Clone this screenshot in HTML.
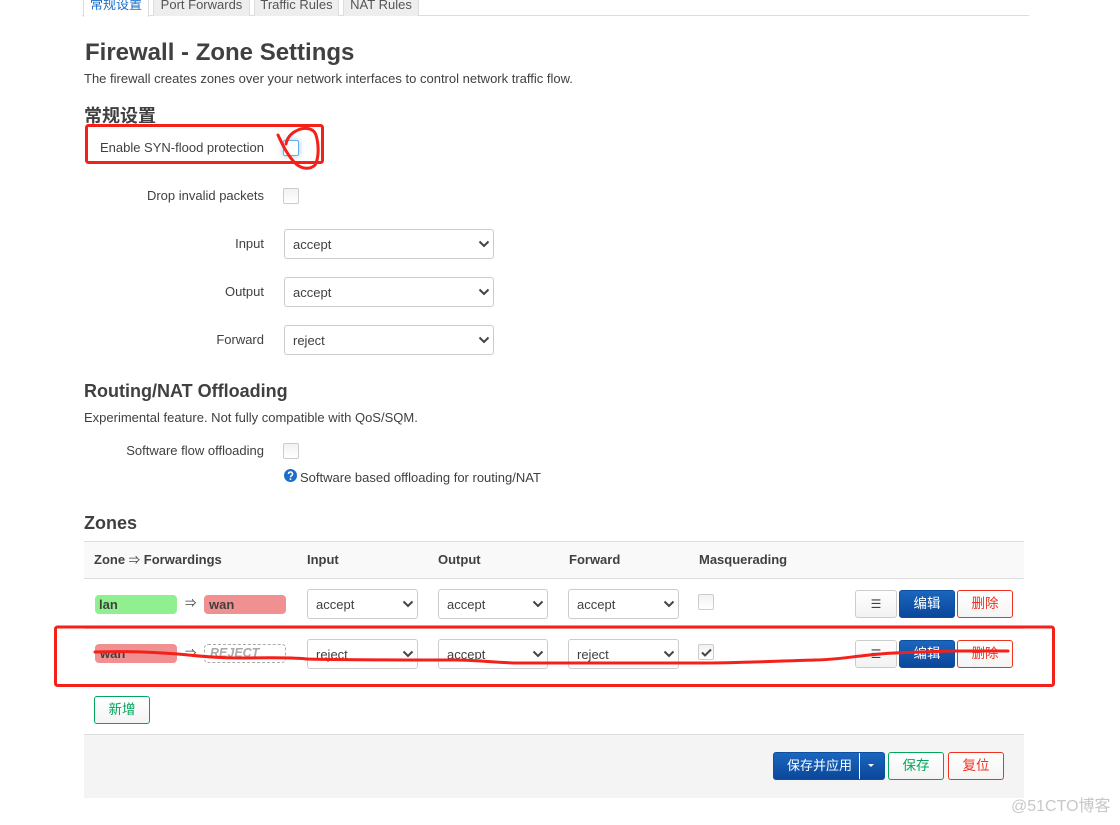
<!DOCTYPE html>
<html><head><meta charset="utf-8"><style>
html,body{margin:0;padding:0;background:#fff}
body{width:1120px;height:825px;position:relative;overflow:hidden;font-family:"Liberation Sans","Noto Sans CJK SC",sans-serif;font-size:13px;color:#404040}
.a{position:absolute;white-space:nowrap}
.lb{position:absolute;right:856px;white-space:nowrap;font-size:13px;line-height:16px}
.cb{position:absolute;width:14px;height:14px;border:1px solid #ccc;border-radius:2px;background:linear-gradient(#f2f2f2,#fff)}
.sel{position:absolute;height:28px;border:1px solid #ccc;border-radius:3px;background:#fff;line-height:30px;padding-left:8px;box-sizing:content-box;font-size:13px;color:#404040}
.sel svg{position:absolute;right:3px;top:10px}
.tab{position:absolute;top:-8px;height:23px;background:#eee;border:1px solid #ddd;border-bottom:0;font-size:13px;line-height:23px;text-align:center;color:#555}
.zone{position:absolute;width:82px;height:19px;border-radius:4px;line-height:19px;padding-left:5px;box-sizing:border-box;font-weight:bold;font-size:13px;color:#404040}
.btn{position:absolute;box-sizing:border-box;border-radius:3px;text-align:center;font-size:13.5px;height:28px;line-height:26px}
.blue{background:linear-gradient(#1a66bf,#0b479b);border:1px solid #0e4f9f;color:#fff}
.red{background:linear-gradient(#fff,#f4f4f4);border:1px solid #f0321e;color:#f0321e}
.grn{background:linear-gradient(#fff,#f4f4f4);border:1px solid #00a65a;color:#00a65a}
.gry{background:linear-gradient(#fff,#f2f2f2);border:1px solid #ccc;color:#404040;font-size:12px}
.arr{position:absolute;font-size:11.5px;line-height:16px}
h3{position:absolute;margin:0;font-size:18px;font-weight:bold;line-height:22px;white-space:nowrap;color:#404040}
</style></head><body>

<div class="a" style="left:82px;top:15px;width:947px;height:1px;background:#ddd"></div>
<div class="tab" style="left:83px;width:64px;background:#fff;border-color:#ddd;height:24px;color:#1a6fc9">常规设置</div>
<div class="tab" style="left:153px;width:95px">Port Forwards</div>
<div class="tab" style="left:254px;width:83px">Traffic Rules</div>
<div class="tab" style="left:343px;width:74px">NAT Rules</div>

<div class="a" style="left:85px;top:39px;font-size:24px;font-weight:bold;line-height:28px">Firewall - Zone Settings</div>
<div class="a" style="left:84px;top:71px;line-height:16px;font-size:13px">The firewall creates zones over your network interfaces to control network traffic flow.</div>

<h3 style="left:84px;top:105px">常规设置</h3>
<div class="lb" style="top:140px">Enable SYN-flood protection</div>
<div class="cb" style="left:283px;top:140px;border-color:#66afe9;background:#fff;box-shadow:0 0 6px rgba(102,175,233,.7)"></div>
<div class="lb" style="top:188px">Drop invalid packets</div>
<div class="cb" style="left:283px;top:188px"></div>

<div class="lb" style="top:236px">Input</div>
<div class="sel" style="left:284px;top:229px;width:200px">accept<svg width="12" height="8" viewBox="0 0 12 8"><path d="M1.500 1.500 6 6l4.500-4.500" fill="none" stroke="#444" stroke-width="2"/></svg></div>
<div class="lb" style="top:284px">Output</div>
<div class="sel" style="left:284px;top:277px;width:200px">accept<svg width="12" height="8" viewBox="0 0 12 8"><path d="M1.500 1.500 6 6l4.500-4.500" fill="none" stroke="#444" stroke-width="2"/></svg></div>
<div class="lb" style="top:332px">Forward</div>
<div class="sel" style="left:284px;top:325px;width:200px">reject<svg width="12" height="8" viewBox="0 0 12 8"><path d="M1.500 1.500 6 6l4.500-4.500" fill="none" stroke="#444" stroke-width="2"/></svg></div>

<h3 style="left:84px;top:380px">Routing/NAT Offloading</h3>
<div class="a" style="left:84px;top:410px;line-height:16px;font-size:13px">Experimental feature. Not fully compatible with QoS/SQM.</div>
<div class="lb" style="top:443px">Software flow offloading</div>
<div class="cb" style="left:283px;top:443px"></div>
<svg class="a" style="left:284px;top:469px" width="13" height="13" viewBox="0 0 13 13"><circle cx="6.500" cy="6.500" r="6.500" fill="#1a6fc9"/><path d="M4.500 5a2 2 0 1 1 3 1.700c-.7.4-1 .8-1 1.500" fill="none" stroke="#fff" stroke-width="1.500"/><rect x="5.700" y="9.300" width="1.600" height="1.600" fill="#fff"/></svg>
<div class="a" style="left:300px;top:470px;line-height:16px;font-size:13px">Software based offloading for routing/NAT</div>

<h3 style="left:84px;top:512px">Zones</h3>

<div class="a" style="left:84px;top:541px;width:940px;height:36px;background:#f9f9f9;border-top:1px solid #ddd;border-bottom:1px solid #ddd"></div>
<div class="a" style="left:94px;top:552px;font-weight:bold;font-size:13px;line-height:16px">Zone <span style="font-size:11.5px;font-weight:normal">⇒</span> Forwardings</div>
<div class="a" style="left:307px;top:552px;font-weight:bold;font-size:13px;line-height:16px">Input</div>
<div class="a" style="left:438px;top:552px;font-weight:bold;font-size:13px;line-height:16px">Output</div>
<div class="a" style="left:569px;top:552px;font-weight:bold;font-size:13px;line-height:16px">Forward</div>
<div class="a" style="left:699px;top:552px;font-weight:bold;font-size:13px;line-height:16px">Masquerading</div>

<div class="zone" style="left:95px;top:595px;background:#90f090;padding-left:4px">lan</div>
<div class="arr" style="left:185px;top:596px">⇒</div>
<div class="zone" style="left:204px;top:595px;background:#f09090">wan</div>
<div class="sel" style="left:307px;top:589px;width:101px">accept<svg width="12" height="8" viewBox="0 0 12 8"><path d="M1.500 1.500 6 6l4.500-4.500" fill="none" stroke="#444" stroke-width="2"/></svg></div>
<div class="sel" style="left:438px;top:589px;width:100px">accept<svg width="12" height="8" viewBox="0 0 12 8"><path d="M1.500 1.500 6 6l4.500-4.500" fill="none" stroke="#444" stroke-width="2"/></svg></div>
<div class="sel" style="left:568px;top:589px;width:101px">accept<svg width="12" height="8" viewBox="0 0 12 8"><path d="M1.500 1.500 6 6l4.500-4.500" fill="none" stroke="#444" stroke-width="2"/></svg></div>
<div class="cb" style="left:698px;top:594px"></div>
<div class="btn gry" style="left:855px;top:590px;width:42px">☰</div>
<div class="btn blue" style="left:899px;top:590px;width:56px">编辑</div>
<div class="btn red" style="left:957px;top:590px;width:56px">删除</div>

<div class="a" style="left:84px;top:628px;width:940px;height:1px;background:#ddd"></div>

<div class="zone" style="left:95px;top:644px;background:#f09090">wan</div>
<div class="arr" style="left:185px;top:646px">⇒</div>
<div class="zone" style="left:204px;top:644px;border:1px dashed #aaa;font-style:italic;color:#aaa;width:82px;line-height:17px;padding-left:5px;font-size:12.500px">REJECT</div>
<div class="sel" style="left:307px;top:639px;width:101px">reject<svg width="12" height="8" viewBox="0 0 12 8"><path d="M1.500 1.500 6 6l4.500-4.500" fill="none" stroke="#444" stroke-width="2"/></svg></div>
<div class="sel" style="left:438px;top:639px;width:100px">accept<svg width="12" height="8" viewBox="0 0 12 8"><path d="M1.500 1.500 6 6l4.500-4.500" fill="none" stroke="#444" stroke-width="2"/></svg></div>
<div class="sel" style="left:568px;top:639px;width:101px">reject<svg width="12" height="8" viewBox="0 0 12 8"><path d="M1.500 1.500 6 6l4.500-4.500" fill="none" stroke="#444" stroke-width="2"/></svg></div>
<div class="cb" style="left:698px;top:644px"><svg style="position:absolute;left:2px;top:3px" width="11" height="9" viewBox="0 0 11 9"><path d="M1 4.500 4 7.500 10 1.500" fill="none" stroke="#444" stroke-width="2"/></svg></div>
<div class="btn gry" style="left:855px;top:640px;width:42px">☰</div>
<div class="btn blue" style="left:899px;top:640px;width:56px">编辑</div>
<div class="btn red" style="left:957px;top:640px;width:56px">删除</div>

<div class="btn grn" style="left:94px;top:696px;width:56px">新增</div>

<div class="a" style="left:84px;top:734px;width:940px;height:63px;background:#f4f4f4;border-top:1px solid #ddd"></div>
<div class="btn blue" style="left:773px;top:752px;width:112px;text-align:left;padding-left:13px;font-size:13px">保存并应用</div>
<div class="a" style="left:859px;top:753px;width:1px;height:26px;background:#fff"></div>
<div class="a" style="left:868px;top:764px;width:0;height:0;border-left:3px solid transparent;border-right:3px solid transparent;border-top:3px solid #fff"></div>
<div class="btn grn" style="left:888px;top:752px;width:56px">保存</div>
<div class="btn red" style="left:948px;top:752px;width:56px">复位</div>

<div class="a" style="left:1011px;top:797px;font-size:16px;line-height:20px;color:#c8c8c8">@51CTO博客</div>

<svg class="a" style="left:0;top:0" width="1120" height="825" viewBox="0 0 1120 825" fill="none" stroke="#f5201a" stroke-linecap="round" stroke-linejoin="round">
<rect x="86.500" y="125.500" width="236" height="37" rx="2" stroke-width="3"/>
<path d="M278 135C283 146 288 156 296 164C302 169 310 170 315 165C319 158 319 145 316 135C313 127 303 127 296 131C290 134 287 139 286 144" stroke-width="3"/>
<rect x="55.500" y="627" width="998" height="58.500" rx="2" stroke-width="3"/>
<path d="M95 652C120 651 150 652 178 654C200 656 215 658 240 658C265 658 285 657 307 659C340 660 400 660 455 660C480 660 495 663 520 663C570 663 640 663 700 663C740 663 780 661 815 660C835 660 855 656 880 654C900 652 930 652 950 651C970 651 990 651 1008 651" stroke-width="3"/>
</svg>

</body></html>
